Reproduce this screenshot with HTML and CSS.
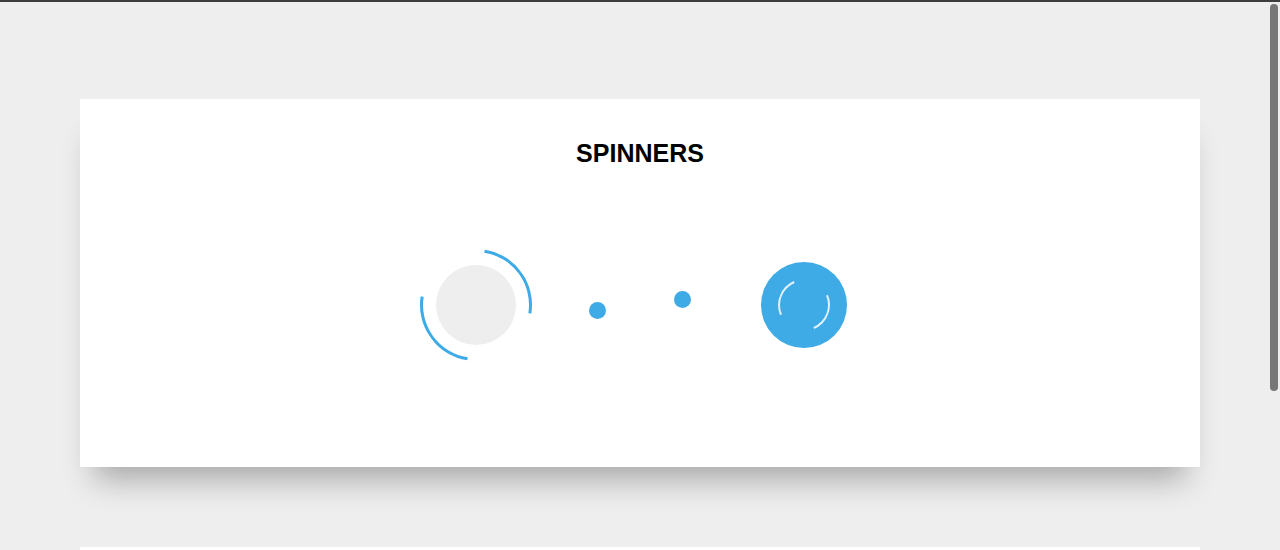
FILE: index.html
```html
<!DOCTYPE html>
<html lang="en">
<head>
<meta charset="utf-8">
<title>Spinners</title>
<link rel="stylesheet" href="styles.css">
</head>
<body>
<div class="topbar"></div>
<main class="page">
  <section class="card">
    <h1 class="card-title">SPINNERS</h1>
    <div class="spinners">
      <div class="spinner-cell">
        <div class="ring-spinner">
          <div class="ring-spinner__arcs"></div>
          <div class="ring-spinner__core"></div>
        </div>
      </div>
      <div class="spinner-cell">
        <div class="dots-spinner">
          <span class="dot dot--low"></span>
          <span class="dot dot--high"></span>
        </div>
      </div>
      <div class="spinner-cell">
        <div class="disc-spinner">
          <div class="disc-spinner__arcs"></div>
        </div>
      </div>
    </div>
  </section>
  <section class="card card--next"></section>
</main>
<div class="scrollbar"><div class="scrollbar__thumb"></div></div>
</body>
</html>
```

FILE: styles.css
```css
html, body {
  margin: 0;
  padding: 0;
  height: 100%;
  overflow: hidden;
}

body {
  background: #eeeeee;
  font-family: "Liberation Sans", Arial, sans-serif;
}

.topbar {
  height: 2px;
  background: #3d3d3d;
}

.page {
  padding: 97px 80px 0;
  display: flex;
  flex-direction: column;
  gap: 80px;
}

.card {
  background: #ffffff;
  height: 368px;
  box-sizing: border-box;
  padding-top: 40px;
  box-shadow: 0 26px 30px -14px rgba(0, 0, 0, 0.3);
}

.card--next {
  box-shadow: none;
}

.card-title {
  margin: 0;
  text-align: center;
  font-size: 25px;
  line-height: 28px;
  font-weight: 700;
  color: #000;
}

.spinners {
  margin-top: 82px;
  display: grid;
  grid-template-columns: repeat(3, 164px);
  justify-content: center;
  height: 112px;
}

.spinner-cell {
  display: flex;
  align-items: center;
  justify-content: center;
}

/* spinner 1 */
.ring-spinner {
  position: relative;
  width: 112px;
  height: 112px;
  display: flex;
  align-items: center;
  justify-content: center;
}

.ring-spinner__arcs {
  position: absolute;
  inset: 0;
  box-sizing: border-box;
  border: 3px solid transparent;
  border-top-color: #3eaae6;
  border-bottom-color: #3eaae6;
  border-radius: 50%;
  transform: rotate(54deg);
}

.ring-spinner__core {
  width: 80px;
  height: 80px;
  border-radius: 50%;
  background: #eeeeee;
}

/* spinner 2 */
.dots-spinner {
  width: 102px;
  height: 40px;
  display: flex;
  justify-content: space-between;
  align-items: center;
}

.dot {
  width: 17px;
  height: 17px;
  border-radius: 50%;
  background: #3eaae6;
}

.dot--low {
  transform: translateY(5px);
}

.dot--high {
  transform: translateY(-6px);
}

/* spinner 3 */
.disc-spinner {
  width: 86px;
  height: 86px;
  border-radius: 50%;
  background: #3eaae6;
  display: flex;
  align-items: center;
  justify-content: center;
}

.disc-spinner__arcs {
  width: 52px;
  height: 52px;
  box-sizing: border-box;
  border-radius: 50%;
  border: 2px solid transparent;
  border-left-color: rgba(255, 255, 255, 0.85);
  border-right-color: rgba(255, 255, 255, 0.85);
  transform: rotate(22deg);
}

/* overlay scrollbar */
.scrollbar {
  position: fixed;
  top: 2px;
  right: 0;
  width: 14px;
  height: 548px;
}

.scrollbar__thumb {
  position: absolute;
  top: 2px;
  right: 2px;
  width: 8px;
  height: 387px;
  border-radius: 4px;
  background: #777777;
}
```
